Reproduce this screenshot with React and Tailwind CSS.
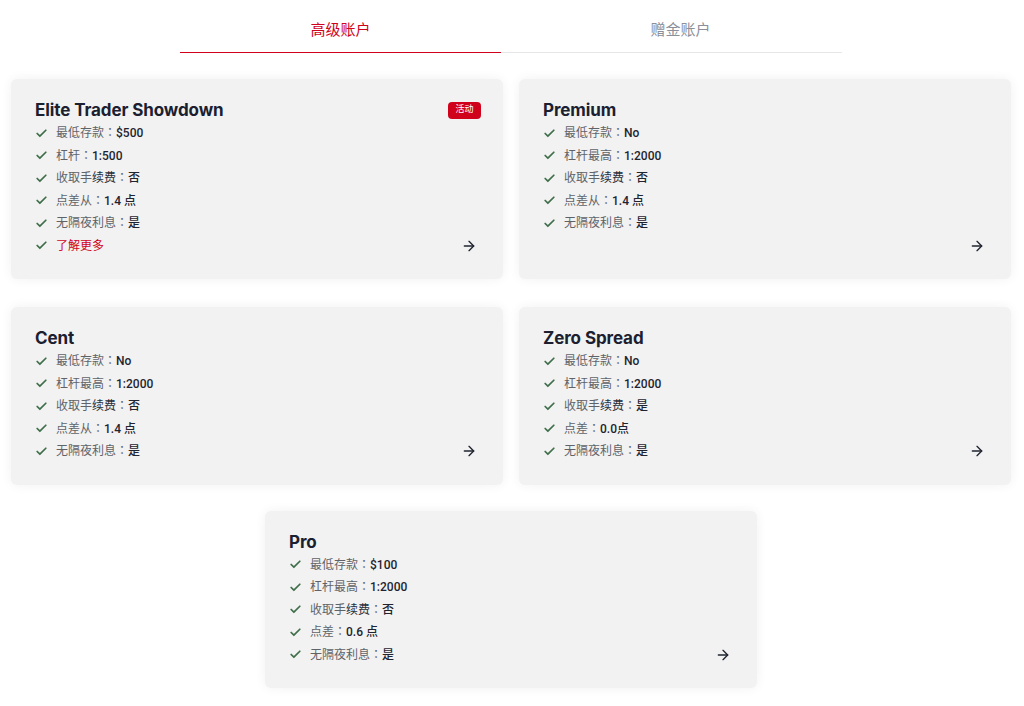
import React from "react";
import { Check, ArrowRight } from "lucide-react";

const cards = [
  {
    title: "Elite Trader Showdown",
    badge: "活动",
    items: [
      ["最低存款", "$500"],
      ["杠杆", "1:500"],
      ["fee", "否"],
      ["点差从", "1.4 点"],
      ["无隔夜利息", "是"],
      ["more"],
    ],
  },
  {
    title: "Premium",
    items: [
      ["最低存款", "No"],
      ["杠杆最高", "1:2000"],
      ["fee", "否"],
      ["点差从", "1.4 点"],
      ["无隔夜利息", "是"],
    ],
  },
  {
    title: "Cent",
    items: [
      ["最低存款", "No"],
      ["杠杆最高", "1:2000"],
      ["fee", "否"],
      ["点差从", "1.4 点"],
      ["无隔夜利息", "是"],
    ],
  },
  {
    title: "Zero Spread",
    items: [
      ["最低存款", "No"],
      ["杠杆最高", "1:2000"],
      ["fee", "是"],
      ["点差", "0.0点"],
      ["无隔夜利息", "是"],
    ],
  },
  {
    title: "Pro",
    items: [
      ["最低存款", "$100"],
      ["杠杆最高", "1:2000"],
      ["fee", "否"],
      ["点差", "0.6 点"],
      ["无隔夜利息", "是"],
    ],
  },
];

function Item({ item }) {
  let content;
  if (item[0] === "more") {
    content = <span className="text-[#d0021b]">了解更多</span>;
  } else if (item[0] === "fee") {
    content = (
      <>
        <span className="text-[#5f6368]">收取手</span>
        <span className="text-[#2a2f3a]">续费</span>
        <span className="text-[#5f6368]">：</span>
        <span className="text-[#1f2430] font-medium">{item[1]}</span>
      </>
    );
  } else {
    content = (
      <>
        <span className="text-[#5f6368]">{item[0]}：</span>
        <span className="text-[#1f2430] font-medium">{item[1]}</span>
      </>
    );
  }
  return (
    <li className="flex items-center h-[22.5px]">
      <Check size={13} strokeWidth={3.2} className="text-[#3f6f4a] shrink-0" />
      <span className="ml-[8px] text-[12px] whitespace-nowrap">{content}</span>
    </li>
  );
}

function Card({ card }) {
  return (
    <div className="w-[492px] bg-[#f2f2f2] rounded-[6px] shadow-[0_0_12px_rgba(0,0,0,0.06)] pt-[20px] pb-[22px] pl-[24px] pr-[26px] flex flex-col">
      <div className="flex items-center justify-between h-[22px] mb-[1px]">
        <h3 className="text-[17px] font-bold text-[#1b2030] font-['Inter',sans-serif] leading-[22px] tracking-[-0.1px]">
          {card.title}
        </h3>
        {card.badge && (
          <span className="mr-[-4px] bg-[#d0021b] text-white text-[9px] rounded-[4px] h-[17px] w-[33px] flex items-center justify-center">
            {card.badge}
          </span>
        )}
      </div>
      <div className="flex justify-between flex-1">
        <ul className="flex flex-col">
          {card.items.map((it, i) => (
            <Item key={i} item={it} />
          ))}
        </ul>
        <div className="h-[22.5px] flex items-center self-end">
          <ArrowRight size={16} strokeWidth={2} className="text-[#1f2430]" />
        </div>
      </div>
    </div>
  );
}

export default function App() {
  return (
    <div className="w-[1024px] min-h-[706px] bg-white font-['Roboto','Noto_Sans_CJK_TC',sans-serif]">
      <div className="flex justify-center">
        <div className="flex ml-[-2px]">
          <div className="w-[321px] h-[53px] flex items-end justify-center pb-[11px] border-b-[1.5px] border-[#d0021b]">
            <span className="text-[15px] text-[#d0021b] leading-[22px]">高级账户</span>
          </div>
          <div className="w-[341px] h-[53px] flex items-end justify-center pb-[11px] pl-[18px] border-b-[1.5px] border-[#e6e6e6]">
            <span className="text-[15px] text-[#8a8f99] leading-[22px]">赠金账户</span>
          </div>
        </div>
      </div>
      <div className="pl-[11px] pt-[26px] w-[1011px]">
        <div className="flex gap-[16px] items-stretch">
          <Card card={cards[0]} />
          <Card card={cards[1]} />
        </div>
        <div className="flex gap-[16px] items-stretch mt-[28px]">
          <Card card={cards[2]} />
          <Card card={cards[3]} />
        </div>
        <div className="flex justify-center mt-[26px]">
          <Card card={cards[4]} />
        </div>
      </div>
    </div>
  );
}
